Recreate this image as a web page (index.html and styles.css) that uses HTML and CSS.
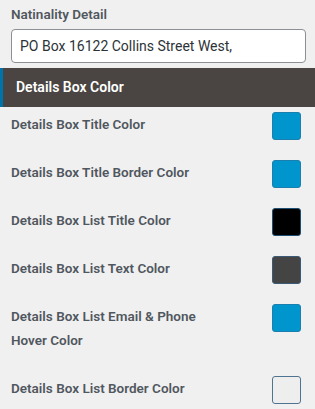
FILE: index.html
```html
<!DOCTYPE html>
<html lang="en">
<head>
  <meta charset="UTF-8" />
  <meta name="viewport" content="width=device-width, initial-scale=1.0" />
  <title>Details Box Settings</title>
  <link rel="stylesheet" href="styles.css">
</head>
<body>
  <div class="panel">
    <div class="field">
      <label class="field-label" for="nationality">Natinality Detail</label>
      <input class="text-input" id="nationality" type="text" value="PO Box 16122 Collins Street West,">
    </div>

    <h3 class="section-title">Details Box Color</h3>

    <div class="color-list">
      <div class="color-row">
        <span class="color-label">Details Box Title Color</span>
        <span class="swatch swatch-blue"></span>
      </div>
      <div class="color-row">
        <span class="color-label">Details Box Title Border Color</span>
        <span class="swatch swatch-blue"></span>
      </div>
      <div class="color-row">
        <span class="color-label">Details Box List Title Color</span>
        <span class="swatch swatch-black"></span>
      </div>
      <div class="color-row">
        <span class="color-label">Details Box List Text Color</span>
        <span class="swatch swatch-dark"></span>
      </div>
      <div class="color-row">
        <span class="color-label">Details Box List Email &amp; Phone<br>Hover Color</span>
        <span class="swatch swatch-blue"></span>
      </div>
      <div class="color-row">
        <span class="color-label">Details Box List Border Color</span>
        <span class="swatch swatch-light"></span>
      </div>
    </div>
  </div>
</body>
</html>
```

FILE: styles.css
```css
/* Panel de ajustes */
:root { --bg: #f0f0f1; --text: #50575e; --header: #4a4542; --accent: #0073aa; --blue: #0096cd; }
* { margin: 0; padding: 0; box-sizing: border-box; }
body {
  background: var(--bg);
  font-family: Roboto, "Liberation Sans", sans-serif;
  color: var(--text);
}
.panel { padding-top: 2px; }
.field { padding: 0 9px 0 11px; }
.field-label {
  display: block; font-size: 13.5px; font-weight: 600;
  line-height: 24px; margin-bottom: 3px;
}
.text-input {
  display: block; width: 100%; height: 34px;
  padding: 0 8px; border: 1px solid #8c8f94; border-radius: 4px;
  background: #fff; color: #2c3338;
  font-family: inherit; font-size: 14px;
}
.section-title {
  margin-top: 5px; height: 39px; line-height: 39px;
  padding-left: 13px;
  background: var(--header); border-left: 3px solid var(--accent);
  color: #fff; font-size: 14px; font-weight: 600;
}
.color-list { padding: 5px 14px 0 11px; }
.color-row { display: flex; justify-content: space-between; align-items: flex-start; }
.color-label {
  font-size: 13.5px; font-weight: 600; line-height: 24px;
  padding-bottom: 24px;
}
.swatch {
  width: 29px; height: 28px; border-radius: 3px;
  border: 1px solid rgba(0,0,0,0.2);
}
.swatch-blue { background: var(--blue); border-color: #1b7fb0; }
.swatch-black { background: #000; border-color: #1c4f73; }
.swatch-dark { background: #444; border-color: #3b5a78; }
.swatch-light { background: #eee; border-color: #4f7491; }
```
